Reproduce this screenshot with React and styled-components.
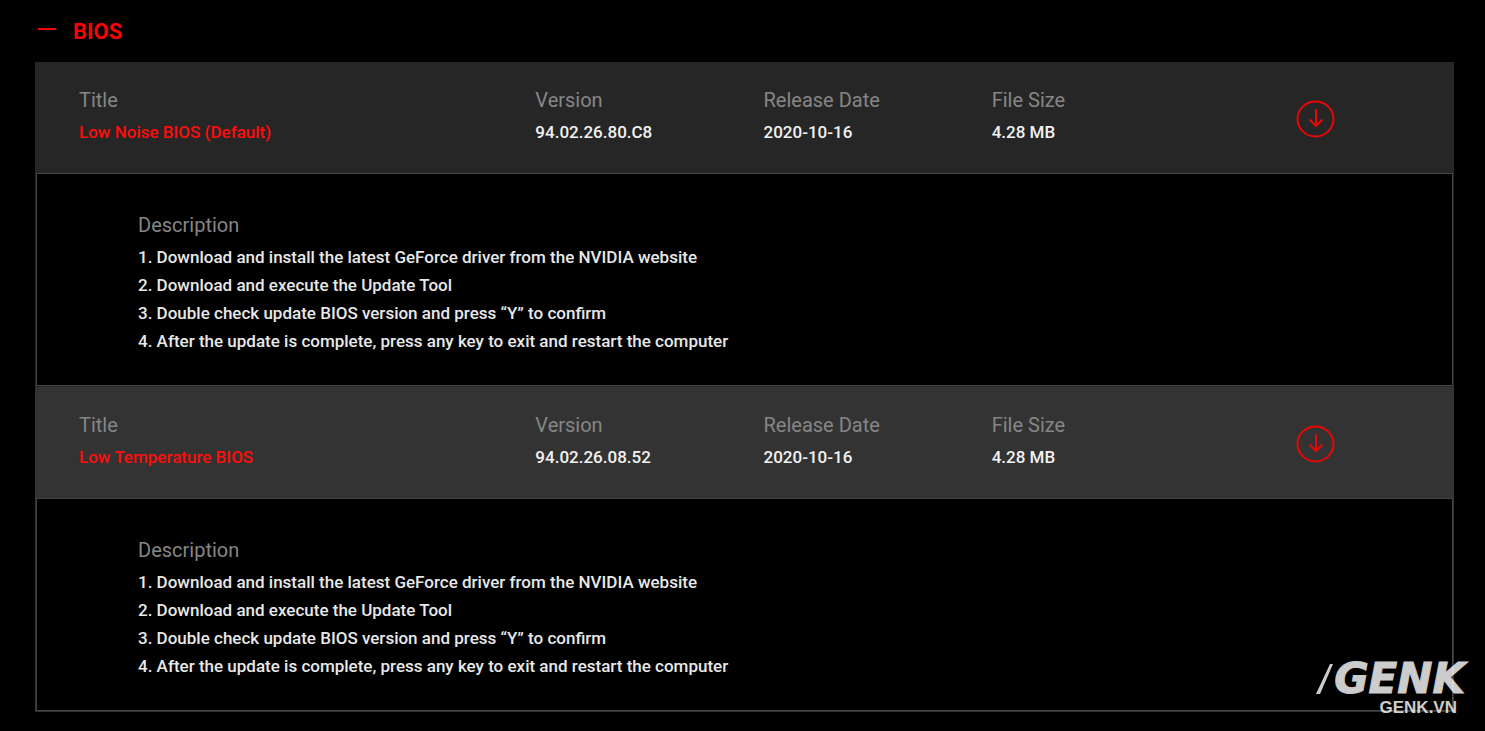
import React, { useState } from 'react';
import styled, { createGlobalStyle } from 'styled-components';

const GlobalStyle = createGlobalStyle`
  * {
    box-sizing: border-box;
  }

  body {
    margin: 0;
    background-color: #000000;
    color: #ffffff;
    font-family: Roboto, 'Liberation Sans', sans-serif;
  }
`;

const PageStyle = styled.main`
  padding: 16px 31px 19px 35px;
`;

const HeadingStyle = styled.h2`
  margin: 0 0 14px;
  font-size: 22px;
  line-height: 32px;
`;

const ToggleButton = styled.button`
  display: flex;
  align-items: center;
  gap: 17px;
  padding: 0 3px;
  border: 0;
  background: none;
  color: #ff0000;
  font: inherit;
  cursor: pointer;
`;

const ToggleIcon = styled.svg`
  width: 18px;
  height: 18px;
  margin-bottom: 6px;
`;

const ItemStyle = styled.article`
  border: 1px solid ${props => (props.$active ? '#333333' : '#262626')};
`;

const ItemHeader = styled.div`
  display: grid;
  grid-template-columns: 24fr 12fr 12fr 12fr 10fr;
  padding: 23px 43px 27px;
  background-color: ${props => (props.$active ? '#333333' : '#262626')};
`;

const FieldLabel = styled.div`
  margin-bottom: 4px;
  color: #868686;
  font-size: 20px;
  line-height: 28px;
`;

const FieldValue = styled.div`
  color: ${props => (props.$highlight ? '#ff0c0c' : '#f2f2f2')};
  font-size: 17px;
  font-weight: 500;
  line-height: 28px;
`;

const DownloadLink = styled.a`
  display: flex;
  align-self: center;
  justify-self: center;
  margin-top: 6px;
  color: #e80606;
`;

const DescriptionStyle = styled.div`
  padding: 37px 101px 30px;
  border: 1px solid #444444;
`;

const StepList = styled.ol`
  margin: 0;
  padding: 0;
  color: #e8e8e8;
  font-size: 17px;
  font-weight: 500;
  line-height: 28px;
  list-style-type: none;
`;

const WatermarkStyle = styled.div`
  position: absolute;
  right: 20px;
  bottom: 14px;
  display: flex;
  flex-direction: column;
  align-items: flex-end;
  gap: 2px;
  color: #ffffff;
  font-weight: 700;
  opacity: 0.8;
`;

const WatermarkLogo = styled.div`
  display: flex;
  align-items: center;
  font-family: 'DejaVu Sans', sans-serif;
  font-size: 42px;
  font-style: italic;
  line-height: 36px;
  -webkit-text-stroke: 1px currentColor;
`;

const WatermarkSite = styled.div`
  margin-right: 8px;
  font-family: 'Liberation Sans', Arial, sans-serif;
  font-size: 17px;
  line-height: 18px;
`;

const steps = [
  'Download and install the latest GeForce driver from the NVIDIA website',
  'Download and execute the Update Tool',
  'Double check update BIOS version and press “Y” to confirm',
  'After the update is complete, press any key to exit and restart the computer'
];

const downloads = [
  {
    title: 'Low Noise BIOS (Default)',
    version: '94.02.26.80.C8',
    date: '2020-10-16',
    size: '4.28 MB'
  },
  {
    title: 'Low Temperature BIOS',
    version: '94.02.26.08.52',
    date: '2020-10-16',
    size: '4.28 MB',
    active: true
  }
];

const Field = ({ label, value, highlight }) => (
  <div>
    <FieldLabel>{label}</FieldLabel>
    <FieldValue $highlight={highlight}>{value}</FieldValue>
  </div>
);

const DownloadIcon = () => (
  <svg width="40" height="38" viewBox="0 0 40 38" fill="none" stroke="currentColor" strokeWidth="2">
    <ellipse cx="20.5" cy="19" rx="18" ry="17.5" />
    <path d="M21 9v17M14.5 19.5l6.5 6.5 6.5-6.5" />
  </svg>
);

const DownloadItem = ({ item }) => (
  <ItemStyle $active={item.active}>
    <ItemHeader $active={item.active}>
      <Field label="Title" value={item.title} highlight />
      <Field label="Version" value={item.version} />
      <Field label="Release Date" value={item.date} />
      <Field label="File Size" value={item.size} />
      <DownloadLink href="/" aria-label={`Download ${item.title}`}>
        <DownloadIcon />
      </DownloadLink>
    </ItemHeader>
    <DescriptionStyle>
      <FieldLabel>Description</FieldLabel>
      <StepList>
        {steps.map((step, index) => (
          <li key={step}>{`${index + 1}. ${step}`}</li>
        ))}
      </StepList>
    </DescriptionStyle>
  </ItemStyle>
);

const Watermark = () => (
  <WatermarkStyle>
    <WatermarkLogo>
      <svg width="18" height="30" viewBox="0 0 18 30" fill="currentColor">
        <path d="M14 0h3L4 30H0z" />
      </svg>
      GENK
    </WatermarkLogo>
    <WatermarkSite>GENK.VN</WatermarkSite>
  </WatermarkStyle>
);

const App = () => {
  const [open, setOpen] = useState(true);
  return (
    <>
      <GlobalStyle />
      <PageStyle>
        <HeadingStyle>
          <ToggleButton type="button" aria-expanded={open} onClick={() => setOpen(!open)}>
            <ToggleIcon viewBox="0 0 18 18" stroke="currentColor" strokeWidth="2">
              <path d="M0 9h18" />
              {!open && <path d="M9 0v18" />}
            </ToggleIcon>
            BIOS
          </ToggleButton>
        </HeadingStyle>
        {open && downloads.map(item => <DownloadItem key={item.title} item={item} />)}
      </PageStyle>
      <Watermark />
    </>
  );
};

export default App;
